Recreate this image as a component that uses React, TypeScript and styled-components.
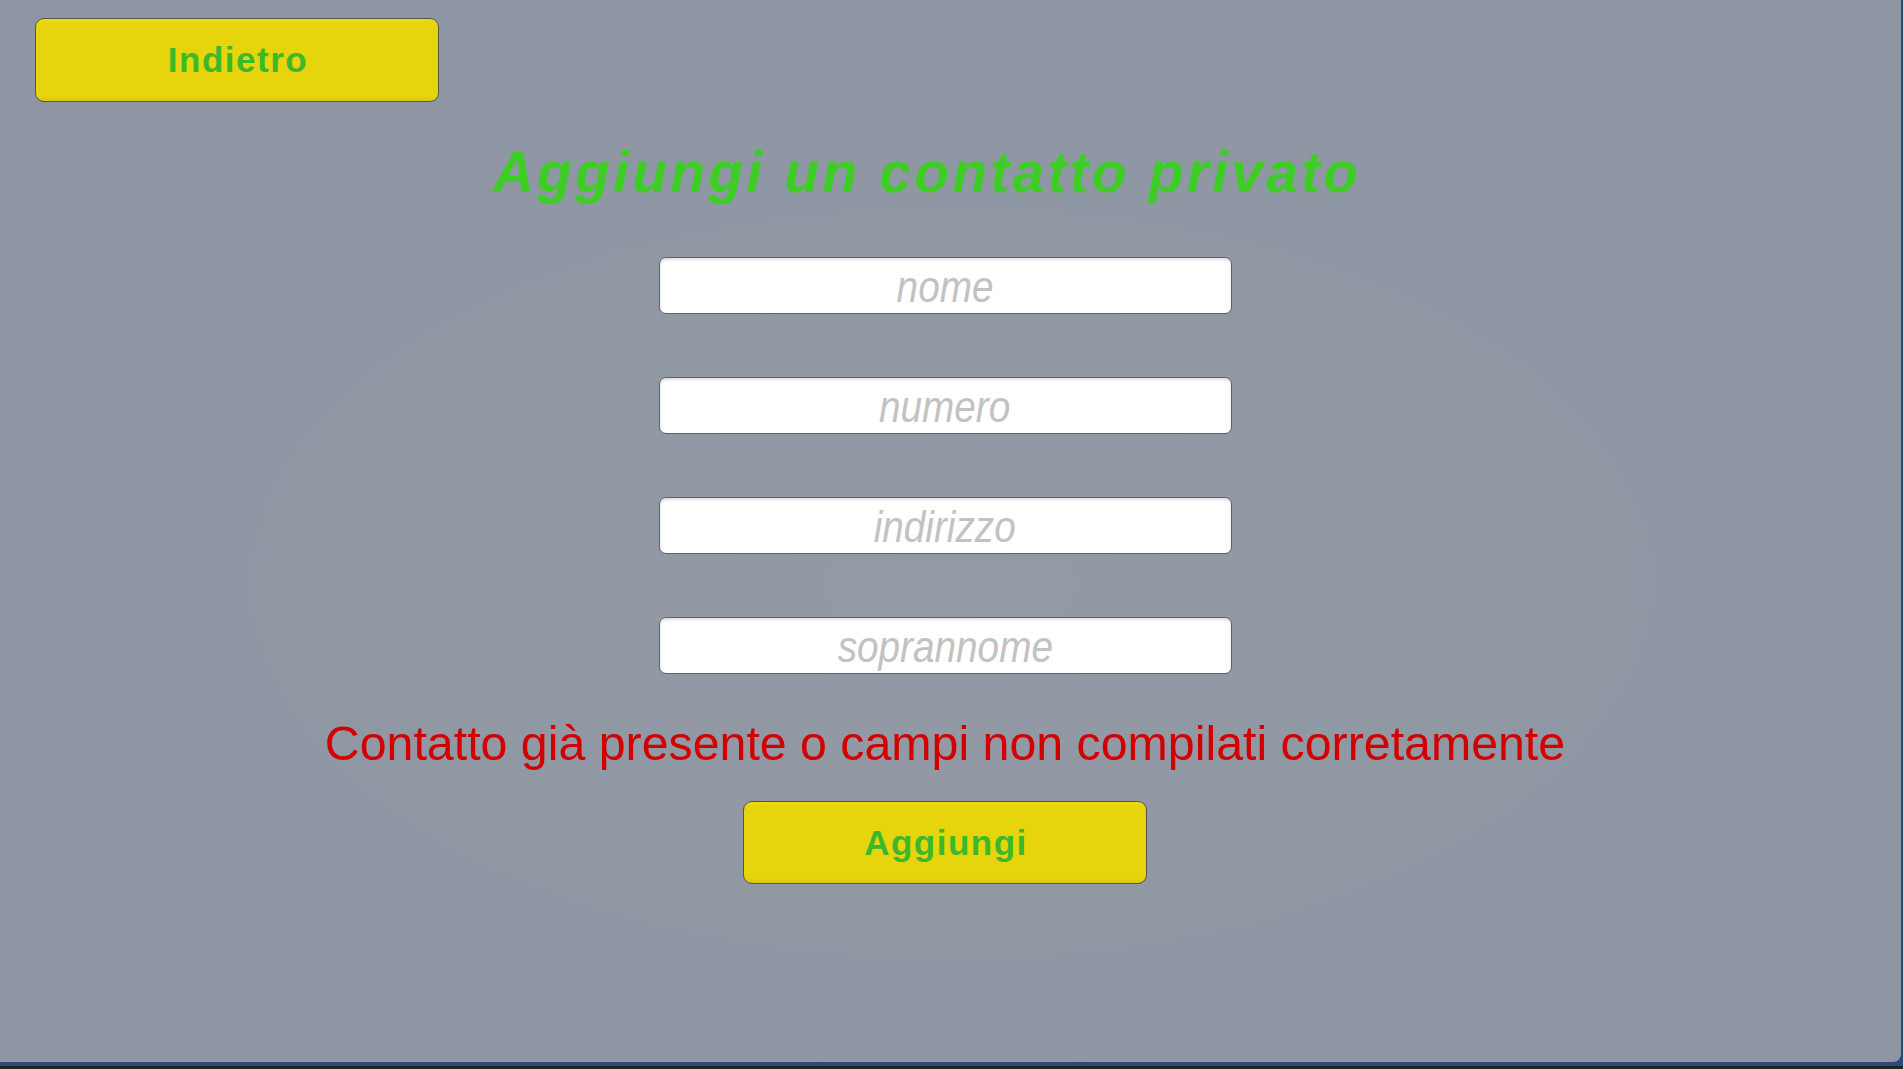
import React from "react";
import styled, { createGlobalStyle } from "styled-components";

const GlobalStyle = createGlobalStyle`
  html, body {
    margin: 0;
    padding: 0;
    background: #232323;
    overflow: hidden;
  }
  body {
    font-family: "Liberation Sans", Arial, sans-serif;
  }
`;

const Frame = styled.div`
  width: 1903px;
  height: 1066px;
  background: #2f4a78;
  display: flex;
  align-items: flex-start;
`;

const Panel = styled.main`
  width: 1901px;
  height: 1062px;
  box-sizing: border-box;
  border-bottom-right-radius: 8px;
  background: radial-gradient(
    ellipse 50% 48% at 50% 55%,
    #939aa6 0%,
    #9098a4 60%,
    #8f96a3 100%
  );
  display: flex;
  flex-direction: column;
`;

const TopBar = styled.div`
  display: flex;
  padding: 18px 0 0 35px;
`;

const YellowButton = styled.button<{ $h?: number }>`
  width: 404px;
  height: ${(p) => p.$h ?? 84}px;
  box-sizing: border-box;
  border: 1px solid #55554a;
  border-radius: 9px;
  background: linear-gradient(#eedc12 0%, #e6d40c 6%, #e6d40c 94%, #d9c70b 100%);
  color: #3cb82b;
  font-family: "Liberation Sans", Arial, sans-serif;
  font-weight: bold;
  font-size: 35px;
  letter-spacing: 1.5px;
  display: flex;
  align-items: center;
  justify-content: center;
  padding: 0 0 0 2px;
  cursor: pointer;
`;

const Column = styled.section`
  display: flex;
  flex-direction: column;
  align-items: center;
  padding-right: 11px;
`;

const Title = styled.h1`
  margin: 38px 0 0 0;
  padding-right: 36px;
  font-family: "Liberation Sans", Arial, sans-serif;
  font-style: italic;
  font-weight: bold;
  font-size: 57px;
  line-height: 64px;
  letter-spacing: 3.2px;
  color: #3dcd25;
  white-space: nowrap;
`;

const Fields = styled.div`
  margin-top: 53px;
  display: flex;
  flex-direction: column;
  gap: 63px;
`;

const Field = styled.div`
  width: 573px;
  height: 57px;
  box-sizing: border-box;
  background: #ffffff;
  border: 1px solid #5e626b;
  border-radius: 7px;
  box-shadow: inset 0 2px 3px rgba(0, 0, 0, 0.13);
  display: flex;
  justify-content: center;
  align-items: center;
  overflow: hidden;
`;

const Placeholder = styled.span`
  display: inline-block;
  font-family: "Liberation Sans", Arial, sans-serif;
  font-style: italic;
  font-size: 44px;
  line-height: 55px;
  color: #c2c2c2;
  transform: scaleX(0.88);
  white-space: nowrap;
  margin-top: 1px;
`;

const ErrorText = styled.p`
  margin: 42px 0 0 0;
  font-family: "Liberation Sans", Arial, sans-serif;
  font-size: 48.3px;
  line-height: 54px;
  color: #d30000;
  white-space: nowrap;
`;

const SubmitWrap = styled.div`
  margin-top: 31px;
  display: flex;
`;

const BottomStrip = styled.div`
  height: 3px;
  background: #232323;
`;

const fields = ["nome", "numero", "indirizzo", "soprannome"];

export default function App() {
  return (
    <>
      <GlobalStyle />
      <Frame>
        <Panel>
          <TopBar>
            <YellowButton>Indietro</YellowButton>
          </TopBar>
          <Column>
            <Title>Aggiungi un contatto privato</Title>
            <Fields>
              {fields.map((f) => (
                <Field key={f}>
                  <Placeholder>{f}</Placeholder>
                </Field>
              ))}
            </Fields>
            <ErrorText>Contatto già presente o campi non compilati corretamente</ErrorText>
            <SubmitWrap>
              <YellowButton $h={83}>Aggiungi</YellowButton>
            </SubmitWrap>
          </Column>
        </Panel>
      </Frame>
      <BottomStrip />
    </>
  );
}
